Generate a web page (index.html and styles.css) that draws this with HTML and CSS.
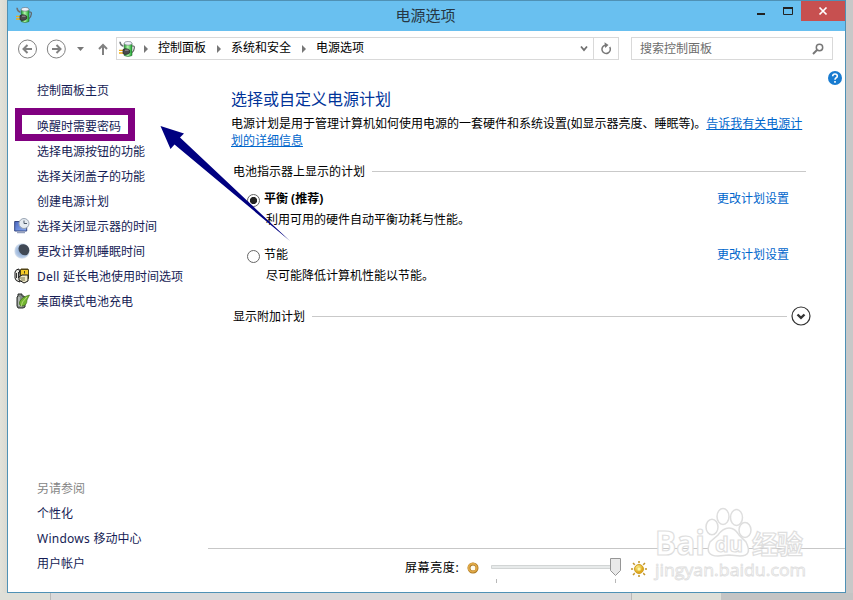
FILE: index.html
```
<!DOCTYPE html>
<html lang="zh-CN">
<head>
<meta charset="utf-8">
<title>电源选项</title>
<link rel="stylesheet" href="styles.css">
</head>
<body>
<svg class="defs" aria-hidden="true">
  <defs>
    <linearGradient id="green" x1="0" x2="1"><stop offset="0" stop-color="#1c9a2c"/><stop offset=".45" stop-color="#b4f7ac"/><stop offset="1" stop-color="#16a52c"/></linearGradient>
    <linearGradient id="blue" x1="0" y1="0" x2="1" y2="1"><stop offset="0" stop-color="#4a66bf"/><stop offset="1" stop-color="#8db0f5"/></linearGradient>
    <radialGradient id="moonGlow"><stop offset=".3" stop-color="#8eabd2"/><stop offset=".8" stop-color="#b4c9e6"/><stop offset="1" stop-color="#dbe4ee"/></radialGradient>
    <radialGradient id="gold" cx=".4" cy=".35"><stop offset="0" stop-color="#fff9a0"/><stop offset="1" stop-color="#e0a91e"/></radialGradient>
    <symbol id="power" viewBox="0 0 16 16">
      <path d="M13 5h1.300q1.200 0 1 2-.3 3.500-2.300 4.500" fill="none" stroke="#5d5f60" stroke-width="1.200"/>
      <path d="M5.200 2.500v12q3.800 2.200 7.800 0v-12z" fill="url(#green)" stroke="#2c6a34" stroke-width=".6"/>
      <ellipse cx="9.100" cy="2.300" rx="3.900" ry="1.900" fill="#eef1f8" stroke="#666b78" stroke-width=".6"/>
      <path d="M1 .8q.3 3.700 3.400 4.400" fill="none" stroke="#6c7175" stroke-width="1.500"/>
      <path d="M0 9.400h4.500M0 12h4.500" stroke="#f0b016" stroke-width="1.400"/>
      <path d="M4 8.600 6 7.800q3.800-.2 4.700 1.500v2.500Q9.500 13.500 6 13.400l-2-.8z" fill="#4b4b4d" stroke="#222" stroke-width=".7"/>
      <path d="M6 9.200h3.500" stroke="#999"/>
    </symbol>
  </defs>
</svg>
<div class="window">
  <header class="titlebar">
    <svg class="app-icon" width="16" height="16"><use href="#power"/></svg>
    <h1>电源选项</h1>
    <div class="controls">
      <svg width="57" height="20" viewBox="0 0 57 20"><path d="M13 12h8v2h-8z" fill="#222"/><path d="M39.500 7.500h9v6h-9z" fill="none" stroke="#222"/><path d="M39 7h10" stroke="#222" stroke-width="2"/></svg>
      <button class="close" aria-label="关闭"><svg width="10" height="10" viewBox="0 0 10 10"><path d="m1.500 1.500 7 7m0-7-7 7" stroke="#fff" stroke-width="1.700"/></svg></button>
    </div>
  </header>
  <nav class="toolbar">
    <svg class="arrows" width="104" height="24" viewBox="0 0 104 24" fill="none" stroke="#818181">
      <circle cx="12.500" cy="12" r="9"/><path d="M17 12H8.500m4-4-4 4 4 4" stroke-width="2"/>
      <circle cx="41.300" cy="12" r="9"/><path d="M37 12h8.500m-4-4 4 4-4 4" stroke-width="2"/>
      <path d="M62 10h7l-3.500 4z" fill="#777" stroke="none"/>
      <path d="M88 18V8m-4 4 4-4 4 4" stroke-width="2"/>
    </svg>
    <div class="address">
      <svg class="addr-icon" width="16" height="16"><use href="#power"/></svg>
      <i class="crumb"></i><span>控制面板</span>
      <i class="crumb"></i><span>系统和安全</span>
      <i class="crumb"></i><span>电源选项</span>
      <svg class="drop" width="8" height="7" viewBox="0 0 8 7"><path d="m1 1.500 3 3.500 3-3.500" fill="none" stroke="#707070" stroke-width="1.800"/></svg>
      <div class="refresh"><svg width="12" height="13" viewBox="0 0 12 13"><path d="M9.700 5A4.200 4.200 0 1 1 5 3.200" fill="none" stroke="#777" stroke-width="1.500"/><path d="m4.500.2 4 2.800-3.300 3z" fill="#777"/></svg></div>
    </div>
    <div class="search"><span>搜索控制面板</span><svg width="12" height="12" viewBox="0 0 12 12"><circle cx="7.500" cy="4.500" r="3.200" fill="none" stroke="#777" stroke-width="1.500"/><path d="m5 7-4 4" stroke="#777" stroke-width="2"/></svg></div>
  </nav>
  <div class="content">
    <aside class="sidebar">
      <a class="home">控制面板主页</a>
      <a><mark class="highlight"></mark>唤醒时需要密码</a>
      <a>选择电源按钮的功能</a>
      <a>选择关闭盖子的功能</a>
      <a>创建电源计划</a>
      <a><svg width="16" height="16" viewBox="0 0 16 16"><path d="M.7 3.500h12v9.500h-12z" fill="url(#blue)" stroke="#344782"/><path d="M3 14.500h8" stroke="#94a0bd" stroke-width="1.500"/><circle cx="10" cy="5.500" r="5" fill="#e4eaf0" stroke="#9aa5b3"/><path d="M10 2.500v3h3" fill="none" stroke="#4d5968"/></svg>选择关闭显示器的时间</a>
      <a><svg width="16" height="16" viewBox="0 0 16 16"><circle cx="8" cy="8" r="7.700" fill="url(#moonGlow)"/><path d="M5.500 2.500a6 6 0 0 1 7.500 9.500A6.500 6.500 0 0 1 5.500 2.500" fill="#414955"/></svg>更改计算机睡眠时间</a>
      <a><svg width="16" height="16" viewBox="0 0 16 16"><path d="M1 4q1-3 4-3l1 5v8q-5-1-5-4z" fill="#e9e9e3" stroke="#161616"/><path d="M2.500 5v5m2-6v6" stroke="#333"/><path d="M6.500 1.500h8v9h-8z" fill="#f4ca27" stroke="#4a3f12"/><path d="M7 1h7M10.500 3v2.500" stroke="#554616"/><path d="M8 7h6v6l-4 2-5-3V9z" fill="#efe9c9" stroke="#161616"/><path d="M6 10h5M7 12h4" stroke="#75704b"/></svg><span class="latin">Dell </span>延长电池使用时间选项</a>
      <a><svg width="16" height="16" viewBox="0 0 16 16"><path d="M4 3V1h4v2h2l1 2v9l-2 1H4l-1-2V4z" fill="#848b86" stroke="#292c2a"/><path d="M5 4v9" stroke="#d8ddd9"/><path d="M15.500 2q-8 2-10 7-.8 3 2 4Q13 13 13 7z" fill="#72b62f" stroke="#365e12" stroke-width=".6"/><path d="M13 4q-6 5-6 10" fill="none" stroke="#d4eb98" stroke-width=".7"/></svg>桌面模式电池充电</a>
      <div class="related"><h3>另请参阅</h3><a>个性化</a><a><span class="latin">Windows </span>移动中心</a><a>用户帐户</a></div>
    </aside>
    <main>
      <section class="plans">
        <h2>选择或自定义电源计划</h2>
        <p class="intro">电源计划是用于管理计算机如何使用电源的一套硬件和系统设置(如显示器亮度、睡眠等)。<a>告诉我有关电源计<br>划的详细信息</a></p>
        <div class="group">电池指示器上显示的计划</div>
        <div class="plan"><i class="radio selected"></i><div><b>平衡 (推荐)</b><p>利用可用的硬件自动平衡功耗与性能。</p></div><a>更改计划设置</a></div>
        <div class="plan"><i class="radio"></i><div><span>节能</span><p>尽可能降低计算机性能以节能。</p></div><a>更改计划设置</a></div>
        <div class="group more">显示附加计划</div>
      </section>
      <svg class="expand" width="20" height="20" viewBox="0 0 20 20" fill="none" stroke="#333"><circle cx="10" cy="10" r="9" stroke-width="1.200"/><path d="m6.500 8.500 3.500 3.300 3.500-3.300" stroke-width="2.400"/></svg>
      <svg class="help" width="14" height="14" viewBox="0 0 14 14"><circle cx="7" cy="7" r="7" fill="#187bd0"/><path d="M4.700 5.200Q4.800 3 7 3t2.300 1.900Q9.300 6 8.200 6.800 7 7.500 7 8.800M7 10v1.700" fill="none" stroke="#fff" stroke-width="1.600"/></svg>
      <footer class="brightness">
        <label>屏幕亮度:</label>
        <svg class="dim" width="12" height="12" viewBox="0 0 12 12"><circle cx="6" cy="6" r="4" fill="#fffdf0" stroke="#a87521" stroke-width="3"/><circle cx="5.700" cy="5.700" r="4" fill="none" stroke="#dfa846" stroke-width="2"/></svg>
        <svg class="slider" width="134" height="26" viewBox="0 0 134 26"><path d="M.5 8.500h126v3H.5z" fill="#e7eaea" stroke="#d2d5d5"/><path d="M5.500 22v4m119-4v4" stroke="#b8b8b8"/><path d="M119.500 1.500h10v12l-5 5-5-5z" fill="#e9e9e9" stroke="#969696"/></svg>
        <svg class="sun" width="16" height="16" viewBox="0 0 16 16"><path d="M8 0v16M0 8h16M2 2l12 12M14 2 2 14" stroke="#c19428" stroke-width="1.500"/><circle cx="8" cy="8" r="6" fill="#fff"/><circle cx="8" cy="8" r="4.500" fill="url(#gold)" stroke="#d3a126"/><circle cx="8" cy="8" r="2" fill="#fff9a8" stroke="#dab330" stroke-width=".5"/></svg>
      </footer>
    </main>
  </div>
</div>
<div class="taskbar"><i></i><i></i><i></i><i></i></div>
<svg class="pointer" width="853" height="600" viewBox="0 0 853 600"><path d="M160.500 126 184 133.500 180 137.500 290 241 174.500 144.500 170.500 149z" fill="#000080"/></svg>
<svg class="watermark" width="180" height="84" viewBox="0 0 180 84">
  <g fill="#fff" stroke="#dedede" stroke-width="1.500">
    <ellipse cx="66" cy="21" rx="6" ry="7.800"/><ellipse cx="77" cy="10.500" rx="6" ry="8"/><ellipse cx="90.500" cy="11.500" rx="6" ry="8"/><ellipse cx="99" cy="24" rx="6" ry="7.500"/>
    <path d="M83 22q6 0 10 7l7 7q7 14-6 14l-11-1-11 1q-14 0-8-14l8-7q5-7 11-7z"/>
  </g>
  <text class="brand" x="9" y="49" textLength="50" lengthAdjust="spacingAndGlyphs">Bai</text><text class="brand du" x="69" y="46" textLength="28" lengthAdjust="spacingAndGlyphs">du</text><text class="brand cjk" x="106" y="48" textLength="51">经验</text>
  <text class="url" x="9" y="70" textLength="151" lengthAdjust="spacingAndGlyphs">jingyan.baidu.com</text>
</svg>
</body>
</html>
```
FILE: styles.css
```
* { box-sizing: border-box; }
body {
  margin: 0;
  width: 853px;
  height: 600px;
  overflow: hidden;
  position: relative;
  font: 12px/17px "Noto Sans", "Noto Sans CJK SC", sans-serif;
  color: #000;
  background: linear-gradient(90deg, #e2e2da 0, #d8d8d0 8px, #c8c8c8 8px);
}
h1, h2, h3, p { margin: 0; font-weight: 400; }
svg { display: block; flex: none; }
.defs { position: absolute; width: 0; height: 0; }
.window {
  width: 839px;
  height: 593px;
  margin-left: 7px;
  border: 1px solid #4f91b5;
  background: #fff;
}
.titlebar {
  height: 30px;
  display: flex;
  background: #69c0f0;
}
.app-icon { margin: 6px 0 0 8px; }
.titlebar h1 { flex: 1; padding-left: 75px; text-align: center; font-size: 15px; line-height: 29px; color: #263744; }
.controls { display: flex; width: 101px; height: 20px; }
.close { width: 44px; height: 20px; padding: 0; border: 0; background: #c75050; display: grid; place-items: center; }
.toolbar { height: 36px; padding: 6px 12px 0 7px; display: flex; }
.toolbar .arrows { margin-right: -3px; }
.address { display: flex; align-items: center; width: 503px; height: 23px; border: 1px solid #d9d9d9; }
.addr-icon { margin: 0 9px 0 2px; }
.crumb { width: 0; height: 0; border: 4px solid transparent; border-left-color: #777; border-right: 0; }
.address span { margin: 0 11px 2px 10px; }
.drop { margin-left: auto; }
.refresh { display: grid; place-items: center; width: 25px; height: 21px; margin-left: 5px; border-left: 1px solid #d9d9d9; }
.search { width: 202px; height: 23px; margin-left: 12px; padding: 0 8px; border: 1px solid #d9d9d9; color: #6d6d6d; display: flex; align-items: center; justify-content: space-between; }
.content { display: grid; grid-template-columns: 200px 1fr; height: 525px; }
.sidebar { display: flex; flex-direction: column; padding: 11px 0 16px 29px; color: #151c55; }
.sidebar a { position: relative; height: 25px; line-height: 25px; white-space: nowrap; }
.sidebar .home { margin-bottom: 11px; }
.sidebar a svg { position: absolute; left: -23px; top: 4px; }
.latin { letter-spacing: .25px; }
.highlight { position: absolute; left: -22px; top: -6px; width: 120px; height: 33px; border: 7px solid #800080; background: transparent; }
.related { margin-top: auto; display: flex; flex-direction: column; }
.related h3 { font-size: 12px; line-height: 25px; color: #858585; }
main { position: relative; display: flex; flex-direction: column; }
.plans { padding: 20px 39px 0 23px; }
h2 { font-size: 16px; line-height: 24px; color: #003399; }
.intro { margin-top: 4px; white-space: nowrap; }
.intro a { color: #0066cc; text-decoration: underline; }
.group { display: flex; align-items: center; gap: 7px; margin: 14px 0 0 2px; }
.group::after { content: ""; flex: 1; height: 1px; background: #c9c9c9; }
.plan { display: flex; margin: 10px 17px 0 16px; height: 46px; }
.plan > div { flex: 1; margin-left: 4px; }
.plan p { margin: 4px 0 0 2px; }
.plan b { font-weight: 700; }
.plan > a { color: #0066cc; }
.radio { width: 13px; height: 13px; margin-top: 4px; border: 1px solid #666; border-radius: 50%; background: #fff; }
.radio.selected { background: radial-gradient(circle, #222 0 3.300px, #fff 3.900px); }
.more { margin: 16px 19px 0 2px; }
.expand { position: absolute; left: 583px; top: 239px; }
.help { position: absolute; left: 620px; top: 4px; }
.brightness { height: 44px; margin-top: auto; border-top: 1px solid #c7c7c7; display: flex; padding-left: 197px; }
.brightness label { margin-top: 10px; width: 56px; white-space: nowrap; letter-spacing: .6px; }
.dim { margin: 13px 0 0 6px; }
.slider { margin: 8px 0 0 12px; }
.sun { margin: 12px 0 0 6px; }
.taskbar { display: grid; grid-template-columns: 51px 581px 89px 132px; height: 7px; }
.taskbar i { background: #dedfd8; }
.taskbar i:nth-child(1), .taskbar i:nth-child(2) { border-right: 1px solid #b8b8b8; }
.taskbar i:nth-child(2) { background: #d9d9da; }
.taskbar i:nth-child(4) { background: #c4c4c4; }
.pointer { position: absolute; left: 0; top: 0; }
.watermark { position: absolute; left: 646px; top: 506px; font-family: "Open Sans", "Noto Sans CJK SC", sans-serif; }
.brand { font-size: 34px; font-weight: 700; fill: #fff; stroke: #dedede; stroke-width: 1.200px; }
.brand.du { font-size: 22px; }
.brand.cjk { font-size: 26px; }
.url { font-size: 17px; fill: #fff; stroke: #dedede; stroke-width: .8px; }
```
